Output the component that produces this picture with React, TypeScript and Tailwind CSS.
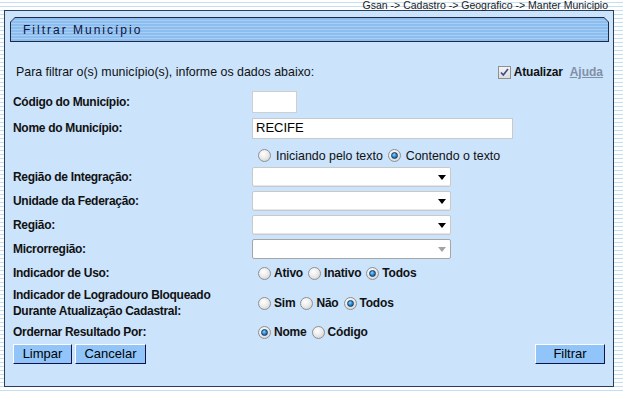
import type { ReactNode } from "react";

function Radio({ checked }: { checked?: boolean }) {
  return (
    <span className="inline-flex size-[13px] shrink-0 items-center justify-center rounded-full border border-[#8f9090] bg-[radial-gradient(circle_at_40%_35%,#ffffff_0%,#ececec_45%,#c9c9c9_100%)]">
      {checked && (
        <span className="size-[7px] rounded-full border border-[#0d3a66] bg-[radial-gradient(circle_at_40%_35%,#8fd3ff_0%,#2a86d0_50%,#0c4f92_100%)]" />
      )}
    </span>
  );
}

function Option({ checked, bold, children }: { checked?: boolean; bold?: boolean; children: ReactNode }) {
  return (
    <span className="mr-[5px] flex items-center">
      <Radio checked={checked} />
      <span className={bold ? "ml-[3px] font-bold tracking-[-0.2px]" : "ml-[5px] text-[12.4px]"}>{children}</span>
    </span>
  );
}

function Select({ disabled }: { disabled?: boolean }) {
  return (
    <div
      className={
        disabled
          ? "flex h-[20px] w-[199px] items-center justify-end rounded-[2px] border border-[#a6a6a6] bg-white pr-[4px]"
          : "flex h-[20px] w-[199px] items-center justify-end rounded-[2px] border border-[#c9c9c9] bg-white pr-[4px] shadow-[inset_0_-1px_0_#e6e6e6]"
      }
    >
      <svg width="8" height="5" viewBox="0 0 8 5">
        <path d="M0 0h8L4 5z" fill={disabled ? "#a3a3a3" : "#000"} />
      </svg>
    </div>
  );
}

function Row({ label, className, children }: { label: ReactNode; className: string; children?: ReactNode }) {
  return (
    <div className={"flex items-center " + className}>
      <div className="w-[239px] shrink-0 font-bold leading-[16px] tracking-[-0.3px]">{label}</div>
      <div className="flex items-center">{children}</div>
    </div>
  );
}

function Button({ children, className }: { children: ReactNode; className: string }) {
  return (
    <button
      className={
        "flex h-[20px] items-center justify-center border border-t-white border-l-white border-r-[#13134a] border-b-[#13134a] bg-[#91c5fa] text-[13px] text-black " +
        className
      }
    >
      {children}
    </button>
  );
}

export default function App() {
  return (
    <div className="h-[393px] w-[623px] overflow-hidden bg-[repeating-linear-gradient(to_bottom,#ffffff_0px,#ffffff_2px,#c4def4_2px,#c4def4_3px,#ffffff_3px,#ffffff_4px)] font-['Liberation_Sans',Arial,sans-serif] text-[12px] text-[#111]">
      <div className="h-[10px] pr-[15px] text-right text-[10.5px] leading-[10px] text-[#222]">
        Gsan -&gt; Cadastro -&gt; Geografico -&gt; Manter Municipio
      </div>

      <div className="ml-[4px] h-[377px] w-[610px] border border-[#2b3d58] bg-[#cbe3fb]">
        {/* title bar */}
        <div className="mt-[6px] ml-[5px] mr-[4px] h-[25px] bg-[#1c2a48] p-px [clip-path:polygon(5px_0,calc(100%-5px)_0,100%_5px,100%_100%,0_100%,0_5px)]">
          <div className="flex h-full items-center bg-[repeating-linear-gradient(to_bottom,#8dbcee_0px,#8dbcee_2px,#a7cff6_2px,#a7cff6_3px)] pl-[12px] text-[12px] tracking-[2px] text-[#0b1640] [clip-path:polygon(4px_0,calc(100%-4px)_0,100%_4px,100%_100%,0_100%,0_4px)]">
            Filtrar Município
          </div>
        </div>

        <div className="pl-[8px] pr-[10px]">
          <div className="mt-[19px] flex h-[22px] items-center">
            <span className="pl-[3px] text-[12.4px]">Para filtrar o(s) município(s), informe os dados abaixo:</span>
            <span className="ml-auto flex items-center">
              <span className="flex size-[13px] items-center justify-center border border-[#8e8f8f] bg-[linear-gradient(#f4f4f4,#dcdcdc)]">
                <svg width="9" height="9" viewBox="0 0 9 9">
                  <path d="M1 4.5l2.3 2.6L8 1" fill="none" stroke="#3b4a8a" strokeWidth="1.6" />
                </svg>
              </span>
              <span className="ml-[3px] font-bold tracking-[-0.2px]">Atualizar</span>
              <span className="ml-[7px] font-bold text-[#8090a6] underline">Ajuda</span>
            </span>
          </div>

          <Row label="Código do Município:" className="mt-[7px] h-[24px]">
            <div className="h-[22px] w-[45px] border border-[#cfcfcf] bg-white" />
          </Row>
          <Row label="Nome do Município:" className="mt-[3px] h-[22px]">
            <div className="flex h-[21px] w-[261px] items-center border border-[#c9c9c9] bg-white pl-[3px] text-[13px] text-black">
              RECIFE
            </div>
          </Row>
          <Row label="" className="mt-[7px] h-[20px]">
            <span className="ml-[6px] flex items-center">
              <Option>Iniciando pelo texto</Option>
              <Option checked>Contendo o texto</Option>
            </span>
          </Row>
          <Row label="Região de Integração:" className="mt-[1px] h-[20px]">
            <Select />
          </Row>
          <Row label="Unidade da Federação:" className="mt-[4px] h-[20px]">
            <Select />
          </Row>
          <Row label="Região:" className="mt-[4px] h-[20px]">
            <Select />
          </Row>
          <Row label="Microrregião:" className="mt-[4px] h-[20px]">
            <Select disabled />
          </Row>
          <Row label="Indicador de Uso:" className="mt-[4px] h-[20px]">
            <span className="ml-[6px] flex items-center">
              <Option bold>Ativo</Option>
              <Option bold>Inativo</Option>
              <Option bold checked>Todos</Option>
            </span>
          </Row>
          <Row
            label={
              <>
                Indicador de Logradouro Bloqueado
                <br />
                Durante Atualização Cadastral:
              </>
            }
            className="mt-[4px] h-[32px]"
          >
            <span className="ml-[6px] flex items-center">
              <Option bold>Sim</Option>
              <Option bold>Não</Option>
              <Option bold checked>Todos</Option>
            </span>
          </Row>
          <Row label="Ordernar Resultado Por:" className="mt-[3px] h-[20px]">
            <span className="ml-[6px] flex items-center">
              <Option bold checked>Nome</Option>
              <Option bold>Código</Option>
            </span>
          </Row>

          <div className="mt-[2px] flex items-center">
            <Button className="w-[59px]">Limpar</Button>
            <Button className="ml-[3px] w-[71px]">Cancelar</Button>
            <Button className="ml-auto mr-[-2px] w-[70px]">Filtrar</Button>
          </div>
        </div>
      </div>
    </div>
  );
}
